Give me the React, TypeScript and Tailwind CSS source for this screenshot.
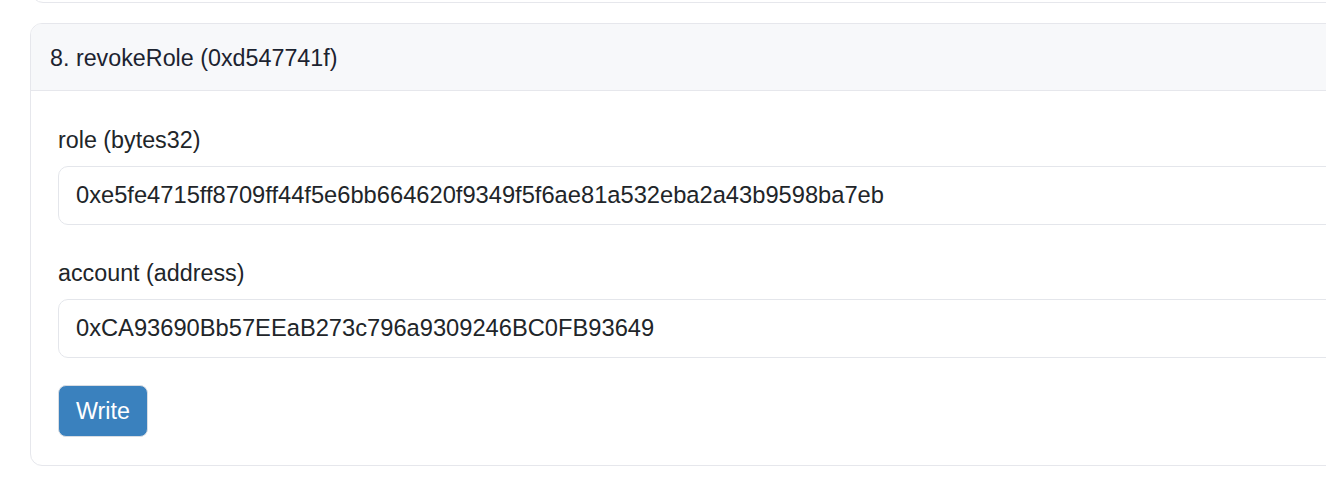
import React from "react";

function Field({ label, value }: { label: string; value: string }) {
  return (
    <div className="flex flex-col">
      <label className="text-[23.3px] leading-[32px] text-[#212529] mb-[10px]">{label}</label>
      <div className="h-[59px] border border-[#e4e6eb] rounded-[10px] bg-white flex items-center pl-[17px] text-[23.7px] text-[#212529] whitespace-nowrap">
        {value}
      </div>
    </div>
  );
}

export default function App() {
  return (
    <div
      className="w-[1326px] h-[477px] overflow-hidden bg-white"
      style={{ fontFamily: '"Liberation Sans", Arial, Helvetica, sans-serif' }}
    >
      <div className="ml-[31px] w-[1400px] -mt-[30px] h-[33px] border border-[#e6e7ec] rounded-[12px] bg-white" />
      <div className="ml-[30px] mt-[20px] w-[1400px] border border-[#e6e7ec] rounded-[12px] bg-white overflow-hidden">
        <div className="h-[67px] bg-[#f7f8fa] border-b border-[#e6e7ec] flex items-center pl-[19px] pt-[3px] text-[23.3px] text-[#1c2330]">
          8. revokeRole (0xd547741f)
        </div>
        <div className="pl-[27px] pt-[33px] pb-[28px] flex flex-col">
          <Field
            label="role (bytes32)"
            value="0xe5fe4715ff8709ff44f5e6bb664620f9349f5f6ae81a532eba2a43b9598ba7eb"
          />
          <div className="h-[32px]" />
          <Field label="account (address)" value="0xCA93690Bb57EEaB273c796a9309246BC0FB93649" />
          <div className="mt-[27px]">
            <button className="h-[52px] px-[17px] bg-[#3a81be] text-white text-[23.3px] rounded-[8px] border border-[#d9dde3]">
              Write
            </button>
          </div>
        </div>
      </div>
    </div>
  );
}
